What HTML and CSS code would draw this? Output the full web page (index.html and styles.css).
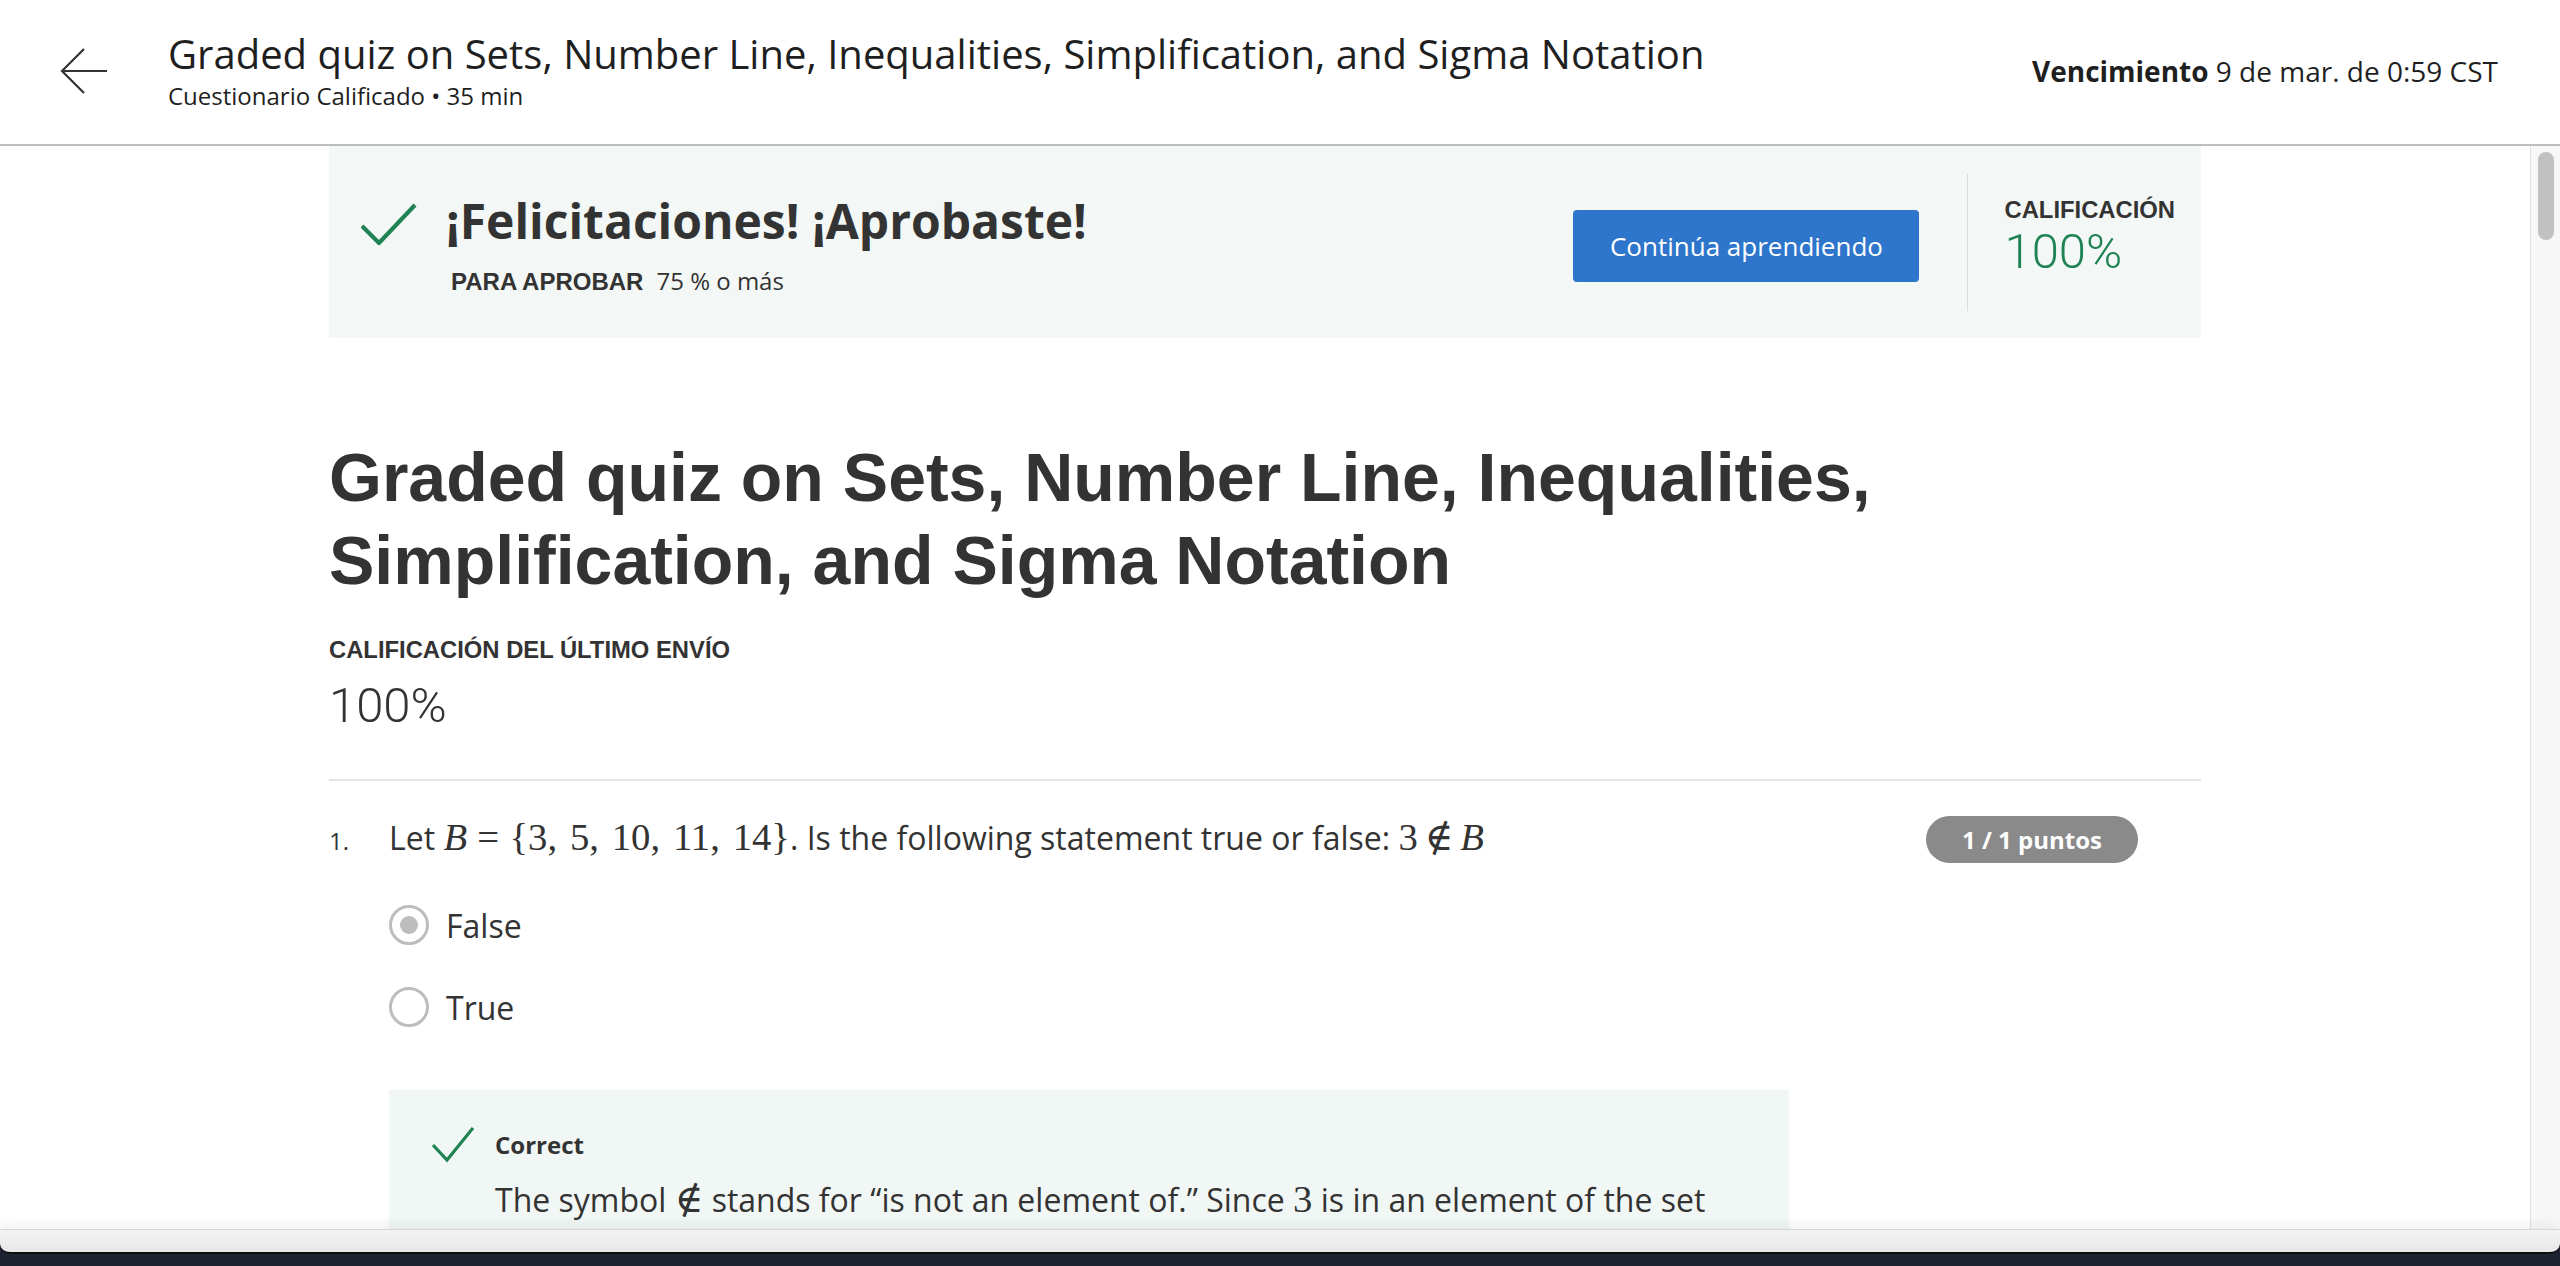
FILE: index.html
```html
<!DOCTYPE html>
<html lang="es">
<head>
<meta charset="utf-8">
<title>Graded quiz</title>
<link rel="stylesheet" href="styles.css">
</head>
<body>
<div class="app">
  <header class="topbar">
    <button class="back" aria-label="Volver">
      <svg width="48" height="46" viewBox="0 0 48 46"><path d="M47 23H2M24 1L2 23L24 45" fill="none" stroke="#333" stroke-width="2.2"/></svg>
    </button>
    <div class="top-titles">
      <h1>Graded quiz on Sets, Number Line, Inequalities, Simplification, and Sigma Notation</h1>
      <div class="sub">Cuestionario Calificado • 35 min</div>
    </div>
    <div class="due"><strong>Vencimiento</strong> 9 de mar. de 0:59 CST</div>
  </header>

  <div class="body-area">
    <main class="scroll">
      <div class="content">
        <section class="banner">
          <div class="banner-main">
            <div class="banner-head">
              <svg class="check-lg" width="56" height="42" viewBox="0 0 56 42"><path d="M1 23L18 40L54 2" fill="none" stroke="#1f8354" stroke-width="4.2"/></svg>
              <h2>¡Felicitaciones! ¡Aprobaste!</h2>
            </div>
            <div class="banner-meta"><span class="meta-label">PARA APROBAR</span>75 % o más</div>
          </div>
          <button class="btn">Continúa aprendiendo</button>
          <div class="divider"></div>
          <div class="grade">
            <div class="caps-label">CALIFICACIÓN</div>
            <div class="grade-value">100%</div>
          </div>
        </section>

        <h2 class="quiz-title">Graded quiz on Sets, Number Line, Inequalities, Simplification, and Sigma Notation</h2>
        <div class="caps-label last-label">CALIFICACIÓN DEL ÚLTIMO ENVÍO</div>
        <div class="score">100%</div>
        <hr class="sep">

        <div class="question">
          <div class="q-head">
            <div class="q-line">
              <span class="q-num">1.</span>
              <span class="q-text">Let <span class="math"><span class="mi">B</span><span class="mrel">=</span>{3,<span class="thin"></span>5,<span class="thin"></span>10,<span class="thin"></span>11,<span class="thin"></span>14}</span>. Is the following statement true or false: <span class="math">3<span class="mrel">∉</span><span class="mi">B</span></span></span>
            </div>
            <div class="badge">1 / 1 puntos</div>
          </div>

          <div class="options">
            <div class="option">
              <span class="radio checked"></span>
              <span class="opt-label">False</span>
            </div>
            <div class="option">
              <span class="radio"></span>
              <span class="opt-label">True</span>
            </div>
          </div>

          <div class="feedback">
            <div class="fb-head">
              <svg class="check-sm" width="42" height="37" viewBox="0 0 42 37"><path d="M1 19L15 34L41 2" fill="none" stroke="#1f8354" stroke-width="3.2"/></svg>
              <span class="fb-title">Correct</span>
            </div>
            <p class="fb-text">The symbol <span class="math">∉</span> stands for “is not an element of.” Since <span class="math">3</span> is in an element of the set</p>
          </div>
        </div>
      </div>
    </main>
    <div class="scrollbar"><div class="thumb"></div></div>
  </div>

  <div class="chrome-bottom"><div class="chrome-band"></div></div>
</div>
</body>
</html>
```

FILE: styles.css
```css
* { box-sizing: border-box; }

html, body {
  margin: 0;
  padding: 0;
}

body {
  font-family: "Open Sans", "Noto Sans", sans-serif;
  color: #333;
  background: #1d2230;
}

.app {
  width: 2560px;
  height: 1266px;
  display: flex;
  flex-direction: column;
  overflow: hidden;
  background: #fff;
}

/* ---------- top bar ---------- */
.topbar {
  flex: none;
  height: 146px;
  display: flex;
  align-items: center;
  padding: 0 62px 2px 60px;
  border-bottom: 2px solid #bdbdbd;
  background: #fff;
}

.back {
  flex: none;
  width: 48px;
  height: 46px;
  padding: 0;
  border: 0;
  background: none;
  margin-right: 60px;
  display: flex;
}

.top-titles h1 {
  margin: 0;
  font-size: 40px;
  font-weight: 400;
  line-height: 48px;
  color: #1f1f1f;
}

.sub {
  margin-top: 2px;
  font-size: 24px;
  line-height: 32px;
  color: #1f1f1f;
}

.due {
  margin-left: auto;
  font-size: 28px;
  color: #1f1f1f;
}

.due strong { font-weight: 700; }

/* ---------- body ---------- */
.body-area {
  flex: 1;
  min-height: 0;
  display: flex;
}

.scroll {
  flex: 1;
  min-width: 0;
  overflow: hidden;
}

.content {
  width: 1872px;
  margin: 0 auto;
}

.scrollbar {
  flex: none;
  width: 30px;
  background: #f7f7f7;
  border-left: 1px solid #e3e3e3;
  padding: 6px 0 0 7px;
}

.thumb {
  width: 16px;
  height: 88px;
  border-radius: 8px;
  background: #c1c1c1;
}

/* ---------- banner ---------- */
.banner {
  display: flex;
  align-items: center;
  height: 192px;
  background: #f3f8f6;
  padding: 0 26px 0 32px;
}

.banner-main {
  flex: 1;
  padding-top: 6px;
}

.banner-head {
  display: flex;
  align-items: center;
  gap: 29px;
}

.check-lg { flex: none; margin-top: 6px; }

.banner-head h2 {
  margin: 0;
  font-size: 48px;
  font-weight: 700;
  line-height: 56px;
  color: #333;
}

.banner-meta {
  margin: 16px 0 0 90px;
  font-size: 24px;
  line-height: 32px;
}

.meta-label {
  font-family: "Liberation Sans", Arial, sans-serif;
  font-weight: 700;
  font-size: 24px;
  margin-right: 13px;
}

.btn {
  flex: none;
  width: 346px;
  height: 72px;
  margin: 8px 48px 0 0;
  border: 0;
  border-radius: 4px;
  background: #2e75cc;
  color: #fff;
  font-family: "Open Sans", sans-serif;
  font-size: 26px;
}

.divider {
  flex: none;
  width: 1px;
  height: 137px;
  background: #dcdcdc;
  margin-right: 36px;
}

.grade { flex: none; margin-bottom: 8px; }

.caps-label {
  font-family: "Liberation Sans", Arial, sans-serif;
  font-weight: 700;
  font-size: 23.8px;
  line-height: 28px;
  color: #333;
}

.grade-value {
  font-family: Roboto, "Liberation Sans", sans-serif;
  font-weight: 300;
  font-size: 49px;
  line-height: 56px;
  color: #1f8354;
}

/* ---------- title ---------- */
.quiz-title {
  margin: 98px 0 0;
  font-family: "Liberation Sans", Arial, sans-serif;
  font-weight: 700;
  font-size: 68px;
  line-height: 83px;
  color: #333;
}

.last-label { margin-top: 34px; }

.score {
  margin-top: 14px;
  font-family: Roboto, "Liberation Sans", sans-serif;
  font-weight: 300;
  font-size: 49px;
  line-height: 56px;
  color: #333;
}

.sep {
  margin: 45px 0 0;
  border: 0;
  border-top: 2px solid #e5e5e5;
}

/* ---------- question ---------- */
.question { margin-top: 33px; }

.q-head {
  display: flex;
  align-items: center;
}

.q-line {
  flex: 1;
  display: flex;
  align-items: baseline;
  font-size: 32px;
  line-height: 48px;
}

.q-num {
  flex: none;
  width: 60px;
  font-size: 24px;
}

.math {
  font-family: "Liberation Serif", "DejaVu Serif", serif;
  font-size: 1.21em;
  line-height: 1;
  white-space: nowrap;
}

.mi { font-style: italic; }

.mrel {
  display: inline-block;
  min-width: 0.778em;
  text-align: center;
  margin: 0 0.16em;
}

.thin { margin-left: 0.33em; }

.badge {
  flex: none;
  height: 47px;
  display: flex;
  align-items: center;
  padding: 0 36px;
  margin-right: 63px;
  border-radius: 24px;
  background: #8a8a8a;
  color: #fff;
  font-size: 24px;
  font-weight: 700;
}

.options { margin: 19px 0 0 60px; }

.option {
  height: 82px;
  display: flex;
  align-items: center;
  gap: 17px;
}

.radio {
  flex: none;
  width: 40px;
  height: 40px;
  border-radius: 50%;
  border: 3px solid #bdbdbd;
  display: flex;
  align-items: center;
  justify-content: center;
}

.radio.checked::after {
  content: "";
  width: 18px;
  height: 18px;
  border-radius: 50%;
  background: #bdbdbd;
}

.opt-label {
  font-size: 32px;
  color: #333;
}

.feedback {
  width: 1400px;
  margin: 42px 0 0 60px;
  padding: 36px 40px 40px 43px;
  background: #f1f7f5;
}

.fb-head {
  display: flex;
  align-items: center;
  gap: 21px;
}

.check-sm { flex: none; }

.fb-title {
  font-size: 24px;
  font-weight: 700;
  line-height: 32px;
}

.fb-text {
  margin: 13px 0 0 63px;
  font-size: 32px;
  line-height: 48px;
}

/* ---------- bottom window chrome ---------- */
.chrome-bottom {
  flex: none;
  height: 37px;
  background: #1d2230;
  border-top: 1px solid #d6d6d6;
  box-shadow: 0 -6px 10px rgba(0, 0, 0, 0.05);
}

.chrome-band {
  height: 24px;
  background: linear-gradient(#f3f3f3, #e7e7e7);
  border-bottom: 2px solid #0e0e0e;
  border-radius: 0 0 10px 10px;
}
```
